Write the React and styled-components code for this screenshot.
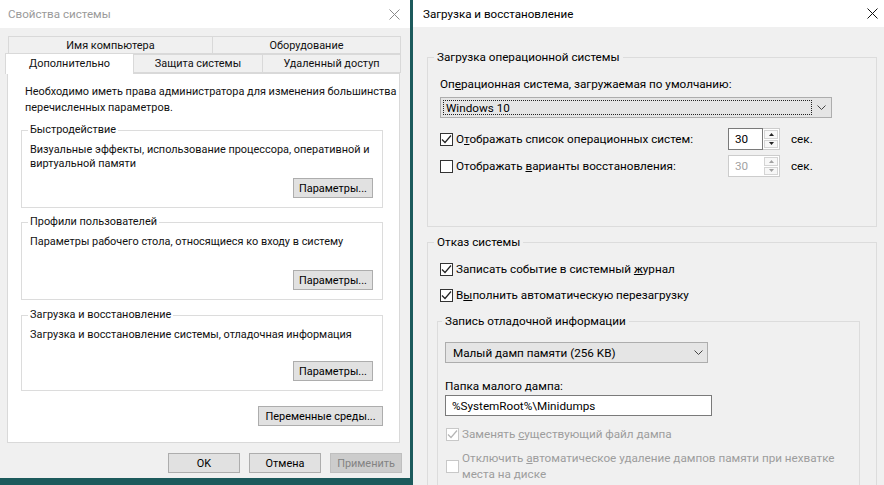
import React from "react";
import styled, { createGlobalStyle } from "styled-components";

const GlobalStyle = createGlobalStyle`
  * { box-sizing: border-box; }
  html, body { margin: 0; padding: 0; }
  body {
    width: 884px;
    height: 485px;
    overflow: hidden;
    background: #1c5a5c;
    font-family: Roboto, "Noto Sans", "DejaVu Sans", sans-serif;
    color: #000;
  }
`;

const Desktop = styled.div`
  display: flex;
  align-items: flex-start;
  gap: 3px;
  width: 884px;
  height: 485px;
`;

const Window = styled.div`
  flex: none;
  display: flex;
  flex-direction: column;
  width: ${(p) => p.$w}px;
  height: ${(p) => p.$h}px;
  background: #f0f0f0;
  overflow: hidden;
`;

const TitleBar = styled.div`
  flex: none;
  height: ${(p) => p.$h}px;
  display: flex;
  align-items: center;
  justify-content: space-between;
  padding: 0 ${(p) => p.$pr}px 0 ${(p) => p.$pl}px;
  background: #fff;
  font-size: 11.6px;
  color: ${(p) => (p.$inactive ? "#9a9a9a" : "#000")};
`;

const CloseIcon = ({ color }) => (
  <svg width="11" height="11" viewBox="0 0 11 11">
    <path d="M0.5 0.5 L10.5 10.5 M10.5 0.5 L0.5 10.5" stroke={color} strokeWidth="1" fill="none" />
  </svg>
);

/* ---------- Left window ---------- */

const LeftBody = styled.div`
  flex: 1;
  display: flex;
  flex-direction: column;
  padding: 8px 8px 0 7px;
  font-size: 10.9px;
  color: #111;
`;

const TabRow = styled.div`
  display: flex;
  align-items: flex-end;
  height: ${(p) => p.$h}px;
  padding-left: ${(p) => p.$pl}px;
  margin-right: 2px;
`;

const Tab = styled.div`
  position: relative;
  flex: none;
  display: flex;
  align-items: center;
  justify-content: center;
  width: ${(p) => p.$w}px;
  height: ${(p) => (p.$active ? 21 : p.$h)}px;
  margin-left: ${(p) => (p.$active ? -2 : p.$first ? 0 : -1)}px;
  margin-bottom: ${(p) => (p.$active ? -1 : 0)}px;
  padding-bottom: ${(p) => (p.$active ? 2 : 0)}px;
  background: ${(p) => (p.$active ? "#fff" : "#f0f0f0")};
  border: 1px solid #d9d9d9;
  border-bottom: ${(p) => (p.$active ? "none" : "1px solid #d9d9d9")};
  z-index: ${(p) => (p.$active ? 2 : 0)};
  white-space: nowrap;
`;

const TabPanel = styled.div`
  position: relative;
  z-index: 1;
  flex: none;
  height: 370px;
  margin-right: 2px;
  display: flex;
  flex-direction: column;
  padding: 10px 16px 0 13px;
  background: #fff;
  border: 1px solid #d9d9d9;
`;

const Intro = styled.div`
  margin-left: 4px;
  line-height: 16px;
  white-space: nowrap;
`;

const Group = styled.fieldset`
  min-width: 0;
  margin: ${(p) => p.$mt}px 0 0 0;
  padding: 5px 9px 9px 8px;
  border: 1px solid #dcdcdc;
`;

const Legend = styled.legend`
  padding: 0 2px;
  margin-left: -2px;
  line-height: 16px;
`;

const GroupInner = styled.div`
  display: flex;
  flex-direction: column;
`;

const Description = styled.div`
  min-height: 28px;
  line-height: 14px;
  white-space: nowrap;
`;

const Button = styled.div`
  flex: none;
  align-self: ${(p) => (p.$end ? "flex-end" : "auto")};
  display: flex;
  align-items: center;
  justify-content: center;
  width: ${(p) => p.$w}px;
  height: 20px;
  margin-top: ${(p) => p.$mt || 0}px;
  background: ${(p) => (p.$disabled ? "#cccccc" : "#e1e1e1")};
  border: 1px solid ${(p) => (p.$disabled ? "#bfbfbf" : "#adadad")};
  color: ${(p) => (p.$disabled ? "#838383" : "#000")};
  font-size: 10.9px;
  white-space: nowrap;
`;

const DialogButtons = styled.div`
  display: flex;
  justify-content: flex-end;
  gap: 9px;
  margin-top: 10px;
`;

/* ---------- Right window ---------- */

const RightBody = styled.div`
  flex: 1;
  display: flex;
  flex-direction: column;
  padding: 21px 7px 0 14px;
  font-size: 11.7px;
  color: #000;
`;

const RGroup = styled.fieldset`
  min-width: 0;
  margin: ${(p) => p.$mt || 0}px 0 0 0;
  padding: ${(p) => p.$pt}px ${(p) => p.$pr}px ${(p) => p.$pb}px ${(p) => p.$pl}px;
  border: 1px solid #dcdcdc;
`;

const RLegend = styled.legend`
  padding: 0 3px;
  margin-left: -3px;
  line-height: 18px;
`;

const Stack = styled.div`
  display: flex;
  flex-direction: column;
  padding-left: ${(p) => p.$pl || 0}px;
`;

const Line = styled.div`
  height: 18px;
  line-height: 18px;
  margin-top: ${(p) => p.$mt || 0}px;
  white-space: nowrap;
`;

const Combo = styled.div`
  flex: none;
  display: flex;
  align-items: center;
  width: ${(p) => p.$w}px;
  height: 21px;
  margin-top: ${(p) => p.$mt || 0}px;
  padding: 2px 0 2px 2px;
  background: #e5e5e5;
  border: 1px solid #adadad;
`;

const ComboText = styled.div`
  flex: 1;
  height: 100%;
  display: flex;
  align-items: center;
  padding-left: ${(p) => (p.$focus ? 2 : 4)}px;
  border: 1px dotted ${(p) => (p.$focus ? "#222" : "transparent")};
  white-space: nowrap;
`;

const ComboArrow = styled.div`
  flex: none;
  width: ${(p) => p.$w}px;
  display: flex;
  align-items: center;
  justify-content: center;
`;

const Chevron = () => (
  <svg width="9" height="5" viewBox="0 0 9 5">
    <path d="M0.5 0.5 L4.5 4.5 L8.5 0.5" stroke="#444" strokeWidth="1" fill="none" />
  </svg>
);

const CheckRow = styled.div`
  display: flex;
  align-items: center;
  min-height: ${(p) => p.$h || 18}px;
  margin-top: ${(p) => p.$mt || 0}px;
  margin-left: ${(p) => p.$ml || 0}px;
  color: ${(p) => (p.$disabled ? "#9d9d9d" : "#000")};
`;

const Box = styled.span`
  flex: none;
  display: flex;
  align-items: center;
  justify-content: center;
  width: 13px;
  height: 13px;
  margin-right: 3px;
  background: #fff;
  border: 1px solid ${(p) => (p.$disabled ? "#c8c8c8" : "#333")};
`;

const CheckLabel = styled.span`
  flex: none;
  width: ${(p) => (p.$w ? `${p.$w}px` : "auto")};
  line-height: ${(p) => p.$lh || 18}px;
  white-space: nowrap;
`;

const CheckBox = ({ checked, disabled }) => (
  <Box $disabled={disabled}>
    {checked && (
      <svg width="11" height="11" viewBox="0 0 11 11">
        <path d="M1 5.5 L4 8.5 L10 1.5" stroke={disabled ? "#b5b5b5" : "#222"} strokeWidth="1.2" fill="none" />
      </svg>
    )}
  </Box>
);

const SpinWrap = styled.div`
  flex: none;
  display: flex;
  width: 52px;
  height: 22px;
  background: #fff;
`;

const SpinField = styled.div`
  flex: 1;
  display: flex;
  align-items: center;
  padding-left: 6px;
  border: 1px solid ${(p) => (p.$disabled ? "#cccccc" : "#7a7a7a")};
  border-right: ${(p) => (p.$disabled ? "none" : "1px solid #7a7a7a")};
  color: ${(p) => (p.$disabled ? "#a3a3a3" : "#000")};
`;

const SpinButtons = styled.div`
  flex: none;
  width: 17px;
  display: flex;
  flex-direction: column;
  gap: 1px;
  padding: 1px;
  border: 1px solid #cccccc;
  border-left: none;
`;

const SpinBtn = styled.div`
  flex: 1;
  display: flex;
  align-items: center;
  justify-content: center;
  background: #f7f7f7;
  border: 1px solid #d4d4d4;
`;

const Tri = ({ up, disabled }) => (
  <svg width="5" height="3" viewBox="0 0 5 3">
    <path d={up ? "M0 3 L2.5 0 L5 3 Z" : "M0 0 L5 0 L2.5 3 Z"} fill={disabled ? "#a0a0a0" : "#222"} />
  </svg>
);

const Spin = ({ value, disabled }) => (
  <SpinWrap>
    <SpinField $disabled={disabled}>{value}</SpinField>
    <SpinButtons>
      <SpinBtn>
        <Tri up disabled={disabled} />
      </SpinBtn>
      <SpinBtn>
        <Tri disabled={disabled} />
      </SpinBtn>
    </SpinButtons>
  </SpinWrap>
);

const Unit = styled.span`
  margin-left: 11px;
`;

const TextInput = styled.div`
  display: flex;
  align-items: center;
  width: ${(p) => p.$w}px;
  height: 21px;
  padding-left: 6px;
  background: #fff;
  border: 1px solid #7a7a7a;
  white-space: nowrap;
`;

export default function App() {
  return (
    <>
      <GlobalStyle />
      <Desktop>
        <Window $w={410} $h={478}>
          <TitleBar $h={28} $pl={8} $pr={10} $inactive>
            <span>Свойства системы</span>
            <CloseIcon color="#8a8a8a" />
          </TitleBar>
          <LeftBody>
            <TabRow $h={18} $pl={1}>
              <Tab $w={205} $h={18} $first>Имя компьютера</Tab>
              <Tab $w={189} $h={18}>Оборудование</Tab>
            </TabRow>
            <TabRow $h={19} $pl={0}>
              <Tab $w={129} $h={19} $active>Дополнительно</Tab>
              <Tab $w={130} $h={19}>Защита системы</Tab>
              <Tab $w={139} $h={19}>Удаленный доступ</Tab>
            </TabRow>
            <TabPanel>
              <Intro>
                Необходимо иметь права администратора для изменения большинства
                <br />
                перечисленных параметров.
              </Intro>
              <Group $mt={6}>
                <Legend>Быстродействие</Legend>
                <GroupInner>
                  <Description>
                    Визуальные эффекты, использование процессора, оперативной и
                    <br />
                    виртуальной памяти
                  </Description>
                  <Button $w={80} $mt={7} $end>Параметры...</Button>
                </GroupInner>
              </Group>
              <Group $mt={6}>
                <Legend>Профили пользователей</Legend>
                <GroupInner>
                  <Description>Параметры рабочего стола, относящиеся ко входу в систему</Description>
                  <Button $w={80} $mt={7} $end>Параметры...</Button>
                </GroupInner>
              </Group>
              <Group $mt={7}>
                <Legend>Загрузка и восстановление</Legend>
                <GroupInner>
                  <Description>Загрузка и восстановление системы, отладочная информация</Description>
                  <Button $w={80} $mt={5} $end>Параметры...</Button>
                </GroupInner>
              </Group>
              <Button $w={125} $mt={15} $end>Переменные среды...</Button>
            </TabPanel>
            <DialogButtons>
              <Button $w={72}>OK</Button>
              <Button $w={72}>Отмена</Button>
              <Button $w={72} $disabled>Применить</Button>
            </DialogButtons>
          </LeftBody>
        </Window>

        <Window $w={471} $h={485}>
          <TitleBar $h={27} $pl={10} $pr={6}>
            <span>Загрузка и восстановление</span>
            <CloseIcon color="#111" />
          </TitleBar>
          <RightBody>
            <RGroup $pt={9} $pr={44} $pb={49} $pl={9}>
              <RLegend>Загрузка операционной системы</RLegend>
              <Stack $pl={3}>
                <Line>
                  Оп<u>е</u>рационная система, загружаемая по умолчанию:
                </Line>
                <Combo $w={392} $mt={4}>
                  <ComboText $focus>Windows 10</ComboText>
                  <ComboArrow $w={19}>
                    <Chevron />
                  </ComboArrow>
                </Combo>
                <CheckRow $h={22} $mt={10}>
                  <CheckBox checked />
                  <CheckLabel $w={272}>
                    О<u>т</u>ображать список операционных систем:
                  </CheckLabel>
                  <Spin value="30" />
                  <Unit>сек.</Unit>
                </CheckRow>
                <CheckRow $h={22} $mt={5}>
                  <CheckBox />
                  <CheckLabel $w={272}>
                    Отображать <u>в</u>арианты восстановления:
                  </CheckLabel>
                  <Spin value="30" disabled />
                  <Unit>сек.</Unit>
                </CheckRow>
              </Stack>
            </RGroup>

            <RGroup $mt={6} $pt={9} $pr={16} $pb={20} $pl={9}>
              <RLegend>Отказ системы</RLegend>
              <Stack>
                <CheckRow $ml={3}>
                  <CheckBox checked />
                  <CheckLabel>
                    Записать событие в системный <u>ж</u>урнал
                  </CheckLabel>
                </CheckRow>
                <CheckRow $ml={3} $mt={8}>
                  <CheckBox checked />
                  <CheckLabel>
                    В<u>ы</u>полнить автоматическую перезагрузку
                  </CheckLabel>
                </CheckRow>
                <RGroup $mt={8} $pt={12} $pr={10} $pb={10} $pl={7}>
                  <RLegend>Запись отладочной информации</RLegend>
                  <Stack>
                    <Combo $w={263}>
                      <ComboText>Малый дамп памяти (256 KB)</ComboText>
                      <ComboArrow $w={17}>
                        <Chevron />
                      </ComboArrow>
                    </Combo>
                    <Line $mt={14}>Папка малого дампа:</Line>
                    <TextInput $w={267}>%SystemRoot%\Minidumps</TextInput>
                    <CheckRow $ml={1} $mt={9} $disabled>
                      <CheckBox checked disabled />
                      <CheckLabel>
                        Заменять <u>с</u>уществующий файл дампа
                      </CheckLabel>
                    </CheckRow>
                    <CheckRow $ml={1} $mt={7} $disabled>
                      <CheckBox disabled />
                      <CheckLabel $lh={16}>
                        Отключить <u>а</u>втоматическое удаление дампов памяти при нехватке
                        <br />
                        места на диске
                      </CheckLabel>
                    </CheckRow>
                  </Stack>
                </RGroup>
              </Stack>
            </RGroup>
          </RightBody>
        </Window>
      </Desktop>
    </>
  );
}
